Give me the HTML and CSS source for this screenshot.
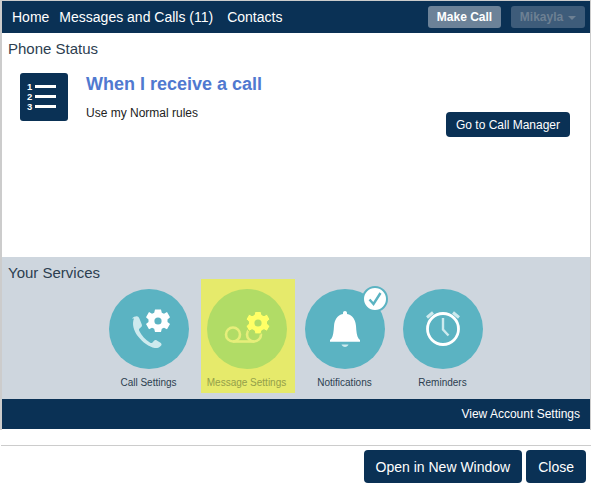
FILE: index.html
```html
<!DOCTYPE html>
<html lang="en">
<head>
<meta charset="utf-8">
<title>Phone Status</title>
<link rel="stylesheet" href="styles.css">
</head>
<body>
<div class="panel">
  <header class="topbar">
    <nav class="nav">
      <a class="nav-home">Home</a>
      <a class="nav-msg">Messages and Calls (11)</a>
      <a class="nav-contacts">Contacts</a>
    </nav>
    <div class="top-actions">
      <span class="btn-top btn-make">Make Call</span>
      <span class="btn-top btn-user">Mikayla<i class="caret"></i></span>
    </div>
  </header>
  <section class="status">
    <h2 class="section-title">Phone Status</h2>
    <div class="status-row">
      <div class="list-tile">
        <svg width="48" height="48" viewBox="0 0 48 48">
          <g fill="#fff" font-family="Liberation Sans, sans-serif" font-size="9.500" font-weight="700">
            <text x="7" y="17">1</text><text x="7" y="27">2</text><text x="7" y="37">3</text>
          </g>
          <g stroke="#fff" stroke-width="2.800"><path d="M15 13.500h21M15 23.500h21M15 33.500h21"/></g>
        </svg>
      </div>
      <div class="status-text">
        <h1 class="status-heading">When I receive a call</h1>
        <p class="status-sub">Use my Normal rules</p>
      </div>
      <span class="btn-manager">Go to Call Manager</span>
    </div>
  </section>
  <section class="services">
    <h2 class="section-title">Your Services</h2>
    <div class="service-row">
      <div class="service">
        <div class="circle">
          <svg width="80" height="80" viewBox="0 0 80 80">
            <path d="M23 29.500c1.500-1.500 4-2.500 5.500-2 1 .3 1.500 1 2 2.200l2.300 5.800c.4 1.200 0 2-.8 2.800l-1.500 1.300c-.6.600-.7 1.200-.3 2.200 2.500 5 6 8.800 11 12 1 .5 1.700.4 2.300-.3l1.500-1.700c.8-.8 1.700-1 2.800-.4l3.700 2.300c1.200.8 1.300 1.800.7 2.800-1.500 1.800-4 3-6.500 2.500-5.500-1-12-5.500-17-12-4-5.500-6-12-3.700-17.500z" fill="#cdeaee"/>
            <g transform="translate(49 32)">
              <path d="M-3-11.500h6l.8 3.200 2.200 1 3-1.600 3 5.200-2.500 2.200v2.400l2.500 2.200-3 5.200-3-1.600-2.200 1-.8 3.200h-6l-.8-3.200-2.200-1-3 1.600-3-5.200 2.500-2.200v-2.400l-2.500-2.200 3-5.200 3 1.600 2.200-1z" fill="#fff"/>
              <circle r="3.600" fill="#5bb3c2"/>
            </g>
          </svg>
        </div>
        <span class="service-label">Call Settings</span>
      </div>
      <div class="service service-active">
        <div class="circle">
          <svg width="80" height="80" viewBox="0 0 80 80">
            <g fill="none" stroke="#e6ee7a" stroke-width="2.600">
              <circle cx="26" cy="45.500" r="7"/>
              <circle cx="47" cy="45.500" r="7"/>
              <path d="M26 52.500h21"/>
            </g>
            <g transform="translate(51 34)">
              <path d="M-3-11.500h6l.8 3.200 2.200 1 3-1.600 3 5.200-2.500 2.200v2.400l2.500 2.200-3 5.200-3-1.600-2.200 1-.8 3.200h-6l-.8-3.200-2.200-1-3 1.600-3-5.200 2.500-2.200v-2.400l-2.500-2.200 3-5.200 3 1.600 2.200-1z" fill="#ffff66" stroke="#b1dc66" stroke-width="1"/>
              <circle r="3.600" fill="#b1dc66"/>
            </g>
          </svg>
        </div>
        <span class="service-label">Message Settings</span>
      </div>
      <div class="service">
        <div class="circle">
          <svg width="80" height="80" viewBox="0 0 80 80">
            <path d="M38 24c0-1.200.8-2 2-2s2 .8 2 2v1c6 1.200 8.500 6 9 12 .3 5 .8 10 2.500 12.500l1.500 1.500v1.800H25v-1.800l1.500-1.500C28.200 47 28.700 42 29 37c.5-6 3-10.800 9-12z" fill="#fff"/>
            <path d="M36.500 55.500h7c-.5 1.500-2 2.500-3.500 2.500s-3-1-3.500-2.500z" fill="#cdeaee"/>
          </svg>
          <span class="badge">
            <svg width="20" height="20" viewBox="0 0 20 20"><path d="M4.500 10.500l4 4.500 7-11" fill="none" stroke="#5bb3c2" stroke-width="2.400"/></svg>
          </span>
        </div>
        <span class="service-label">Notifications</span>
      </div>
      <div class="service">
        <div class="circle">
          <svg width="80" height="80" viewBox="0 0 80 80">
            <circle cx="40" cy="40" r="15.500" fill="none" stroke="#fff" stroke-width="2.800"/>
            <path d="M40 29v11.500l5.500 6" fill="none" stroke="#cdeaee" stroke-width="2.400"/>
            <path d="M24 28.500l6-5M56 28.500l-6-5" fill="none" stroke="#cdeaee" stroke-width="3"/>
          </svg>
        </div>
        <span class="service-label">Reminders</span>
      </div>
    </div>
  </section>
  <footer class="account-bar"><a class="account-link">View Account Settings</a></footer>
</div>
<div class="dialog-actions">
  <span class="btn-dialog">Open in New Window</span>
  <span class="btn-dialog">Close</span>
</div>
</body>
</html>
```

FILE: styles.css
```css
* { box-sizing: border-box; }
html, body { margin: 0; padding: 0; }
body {
  width: 591px;
  height: 488px;
  background: #fff;
  font-family: "Liberation Sans", Arial, sans-serif;
  color: #222;
  overflow: hidden;
}
.panel {
  height: 430px;
  border: 1px solid #ccc;
  border-left-width: 2px;
  border-bottom: 0;
  display: flex;
  flex-direction: column;
}
.topbar {
  height: 32px;
  flex: none;
  background: #0a3155;
  display: flex;
  align-items: center;
  justify-content: space-between;
  padding: 0 5px 0 10px;
}
.nav { display: flex; font-size: 14px; color: #fff; }
.nav-home { margin-right: 10px; }
.nav-msg { margin-right: 14px; }
.top-actions { display: flex; gap: 10px; }
.btn-top {
  height: 22px;
  border-radius: 3px;
  display: flex;
  align-items: center;
  justify-content: center;
  font-size: 12px;
  font-weight: 700;
}
.btn-make { width: 73px; background: #6c8298; color: #fff; }
.btn-user { width: 74px; background: #3e5c7a; color: #6d8093; }
.caret {
  display: inline-block;
  margin-left: 5px;
  margin-top: 2px;
  border-left: 4px solid transparent;
  border-right: 4px solid transparent;
  border-top: 4px solid #6d8093;
}
.status {
  flex: none;
  height: 224px;
  padding: 8px 6px 0;
  background: #fff;
}
.section-title {
  margin: 0;
  font-size: 15px;
  font-weight: 400;
  line-height: 16px;
  color: #2c3e50;
}
.status-row { position: relative; display: flex; margin: 16px 14px 0 12px; }
.list-tile {
  width: 48px;
  height: 48px;
  background: #0a3155;
  border-radius: 3px;
  flex: none;
}
.list-tile svg { display: block; }
.status-text { margin-left: 18px; }
.status-heading {
  margin: 0;
  font-size: 18px;
  line-height: 22px;
  font-weight: 700;
  color: #5079d0;
}
.status-sub { margin: 11px 0 0; font-size: 12px; line-height: 14px; color: #222; }
.btn-manager {
  position: absolute;
  right: 0;
  top: 39px;
  width: 124px;
  height: 25px;
  background: #0a3155;
  color: #fff;
  border-radius: 4px;
  font-size: 12px;
  display: flex;
  align-items: center;
  justify-content: center;
}
.services {
  flex: none;
  height: 142px;
  background: #ced6de;
  padding: 8px 6px 0;
}
.service-row {
  display: flex;
  justify-content: center;
  margin: 6px 0 0 -1px;
  gap: 4px;
}
.service {
  width: 94px;
  height: 114px;
  padding-top: 10px;
  margin-top: -8px;
  display: flex;
  flex-direction: column;
  align-items: center;
}
.circle {
  position: relative;
  width: 80px;
  height: 80px;
  border-radius: 50%;
  background: #5bb3c2;
}
.circle > svg { display: block; }
.service-label {
  margin-top: 8px;
  font-size: 10px;
  line-height: 12px;
  color: #2c3e50;
  white-space: nowrap;
}
.service-active { background: #e6ea6b; margin-left: 1px; margin-right: -1px; padding-right: 2px; }
.service-active .circle { background: #b1dc66; }
.service-active .service-label { color: #94a04a; }
.badge {
  position: absolute;
  right: -3px;
  top: -3px;
  width: 26px;
  height: 26px;
  border-radius: 50%;
  background: #fff;
  border: 2px solid #5bb3c2;
  display: flex;
  align-items: center;
  justify-content: center;
}
.account-bar {
  flex: none;
  height: 30px;
  background: #0a3155;
  display: flex;
  align-items: center;
  justify-content: flex-end;
  padding-right: 10px;
  font-size: 12px;
  color: #fff;
}
.dialog-actions {
  margin-top: 15px;
  margin-left: 1px;
  border-top: 1px solid #ccc;
  padding: 4px 5px 0 0;
  display: flex;
  justify-content: flex-end;
  gap: 4px;
}
.btn-dialog {
  height: 33px;
  padding: 0 12px;
  background: #0a3155;
  color: #fff;
  border-radius: 4px;
  font-size: 14px;
  display: flex;
  align-items: center;
}
```
